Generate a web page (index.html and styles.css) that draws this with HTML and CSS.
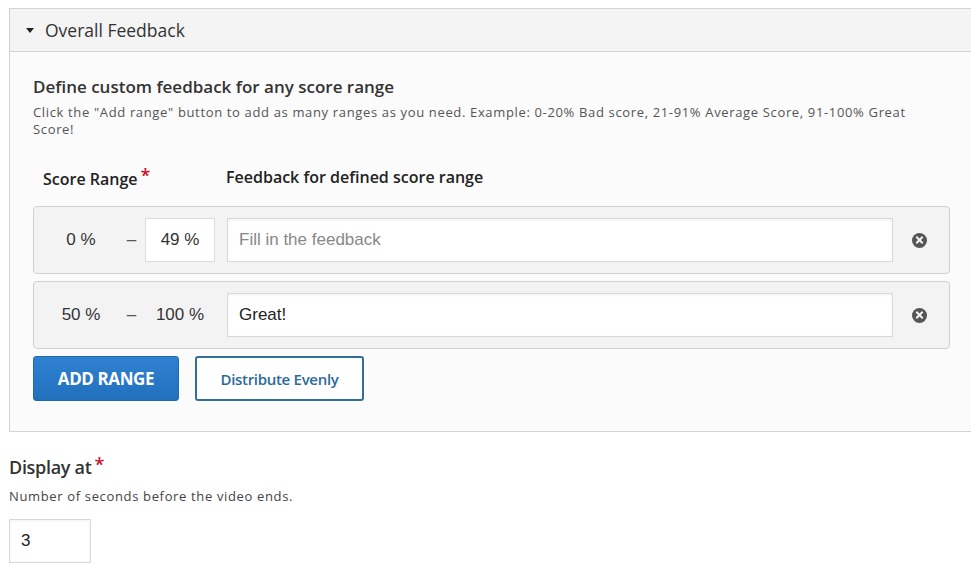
FILE: index.html
```html
<!DOCTYPE html>
<html lang="en">
<head>
    <meta charset="UTF-8">
    <meta name="viewport" content="width=device-width, initial-scale=1.0">
    <title>Overall Feedback</title>
    <link rel="stylesheet" href="styles.css">
</head>
<body>
    <!-- Painel de feedback geral -->
    <div class="panel">
        <div class="panel-header">
            <span class="caret"></span>
            <span>Overall Feedback</span>
        </div>
        <div class="panel-body">
            <h2 class="section-title">Define custom feedback for any score range</h2>
            <p class="description">Click the "Add range" button to add as many ranges as you need. Example: 0-20% Bad score, 21-91% Average Score, 91-100% Great Score!</p>

            <div class="range-headers">
                <div class="head-score">Score Range<span class="required">*</span></div>
                <div class="head-feedback">Feedback for defined score range</div>
            </div>

            <div class="range-row">
                <div class="range-from">0 %</div>
                <div class="range-dash">&ndash;</div>
                <div class="range-to input">49 %</div>
                <input class="feedback-input" type="text" placeholder="Fill in the feedback">
                <div class="remove"><span class="remove-icon"></span></div>
            </div>

            <div class="range-row">
                <div class="range-from">50 %</div>
                <div class="range-dash">&ndash;</div>
                <div class="range-to">100 %</div>
                <input class="feedback-input" type="text" value="Great!">
                <div class="remove"><span class="remove-icon"></span></div>
            </div>

            <div class="actions">
                <button class="btn btn-primary">ADD RANGE</button>
                <button class="btn btn-outline">Distribute Evenly</button>
            </div>
        </div>
    </div>

    <div class="field">
        <label class="field-label">Display at<span class="required">*</span></label>
        <p class="field-desc">Number of seconds before the video ends.</p>
        <input class="small-input" type="text" value="3">
    </div>
</body>
</html>
```

FILE: styles.css
```css
/* Estilos gerais */
body {
    margin: 0;
    padding: 8px 0 0 9px;
    background-color: #fff;
    font-family: "Open Sans", sans-serif;
    color: #333;
    overflow: hidden;
}

.panel {
    width: 975px;
    border: 1px solid #d4d4d4;
    background-color: #fbfbfb;
}

.panel-header {
    height: 42px;
    display: flex;
    align-items: center;
    padding-left: 16px;
    background-color: #f4f4f4;
    border-bottom: 1px solid #d4d4d4;
    font-size: 17.5px;
    color: #333;
}

.caret {
    width: 0;
    height: 0;
    border-left: 4px solid transparent;
    border-right: 4px solid transparent;
    border-top: 5px solid #222;
    margin-right: 11px;
    margin-top: 1px;
}

.panel-body {
    padding: 23px 35px 30px 23px;
}

.section-title {
    margin: 0;
    font-size: 17px;
    font-weight: 600;
    line-height: 24px;
    color: #333;
}

.description {
    margin: 5px 0 0 0;
    font-size: 13px;
    line-height: 17px;
    letter-spacing: 0.65px;
    color: #555;
}

.range-headers {
    display: flex;
    margin-top: 28px;
    height: 40px;
    font-size: 16px;
    font-weight: 600;
    color: #222;
}

.head-score {
    width: 183px;
    padding-left: 10px;
}

.required {
    color: #c8102e;
    margin-left: 3px;
    font-size: 18px;
    position: relative;
    top: -3px;
}

.range-row {
    display: flex;
    align-items: center;
    height: 44px;
    padding: 11px 0 11px 10px;
    margin-bottom: 7px;
    background-color: #f3f3f3;
    border: 1px solid #d0d0d0;
    border-radius: 4px;
    font-family: "Liberation Sans", Arial, sans-serif;
    font-size: 17px;
    color: #333;
}

.range-from {
    width: 74px;
    text-align: center;
}

.range-dash {
    width: 27px;
    text-align: center;
    color: #555;
}

.range-to {
    width: 70px;
    text-align: center;
}

.range-to.input {
    height: 42px;
    line-height: 42px;
    width: 68px;
    background-color: #fff;
    border: 1px solid #ddd;
}

.feedback-input {
    flex: 1;
    height: 44px;
    margin-left: 12px;
    padding: 0 11px;
    box-sizing: border-box;
    border: 1px solid #d8d8d8;
    background-color: #fff;
    box-shadow: inset 0 1px 3px rgba(0, 0, 0, 0.06);
    font-family: "Liberation Sans", Arial, sans-serif;
    font-size: 17px;
    color: #222;
    outline: none;
}

.feedback-input::placeholder {
    color: #888;
}

.remove {
    width: 52px;
    display: flex;
    justify-content: center;
    margin-right: 4px;
}

.remove-icon {
    width: 15px;
    height: 15px;
    border-radius: 50%;
    background-color: #555;
    position: relative;
}

.remove-icon::before, .remove-icon::after {
    content: "";
    position: absolute;
    left: 3px;
    top: 6.5px;
    width: 9px;
    height: 2px;
    background-color: #f3f3f3;
    transform: rotate(45deg);
}

.remove-icon::after {
    transform: rotate(-45deg);
}

.actions {
    display: flex;
    gap: 16px;
    margin-top: 1px;
}

.btn {
    height: 45px;
    border-radius: 3px;
    font-family: "Open Sans", sans-serif;
    cursor: pointer;
}

.btn-primary {
    width: 146px;
    background: linear-gradient(#2f81d1, #2170bd);
    border: 1px solid #1f69b0;
    color: #fff;
    font-size: 17px;
    font-weight: 700;
    letter-spacing: -0.4px;
}

.btn-outline {
    width: 169px;
    background-color: #fff;
    border: 2px solid #326f98;
    color: #2b6a9a;
    font-size: 15px;
    font-weight: 600;
    letter-spacing: -0.3px;
}

.field {
    padding-top: 22px;
}

.field-label {
    display: block;
    font-size: 18px;
    font-weight: 600;
    color: #333;
    line-height: 26px;
    letter-spacing: -0.3px;
}

.field-desc {
    margin: 8px 0 0 0;
    font-size: 13px;
    line-height: 17px;
    letter-spacing: 0.65px;
    color: #444;
}

.small-input {
    margin-top: 14px;
    width: 82px;
    height: 44px;
    box-sizing: border-box;
    padding: 0 11px;
    border: 1px solid #d8d8d8;
    box-shadow: inset 0 1px 3px rgba(0, 0, 0, 0.06);
    font-family: "Liberation Sans", Arial, sans-serif;
    font-size: 17px;
    color: #222;
    outline: none;
}
```
